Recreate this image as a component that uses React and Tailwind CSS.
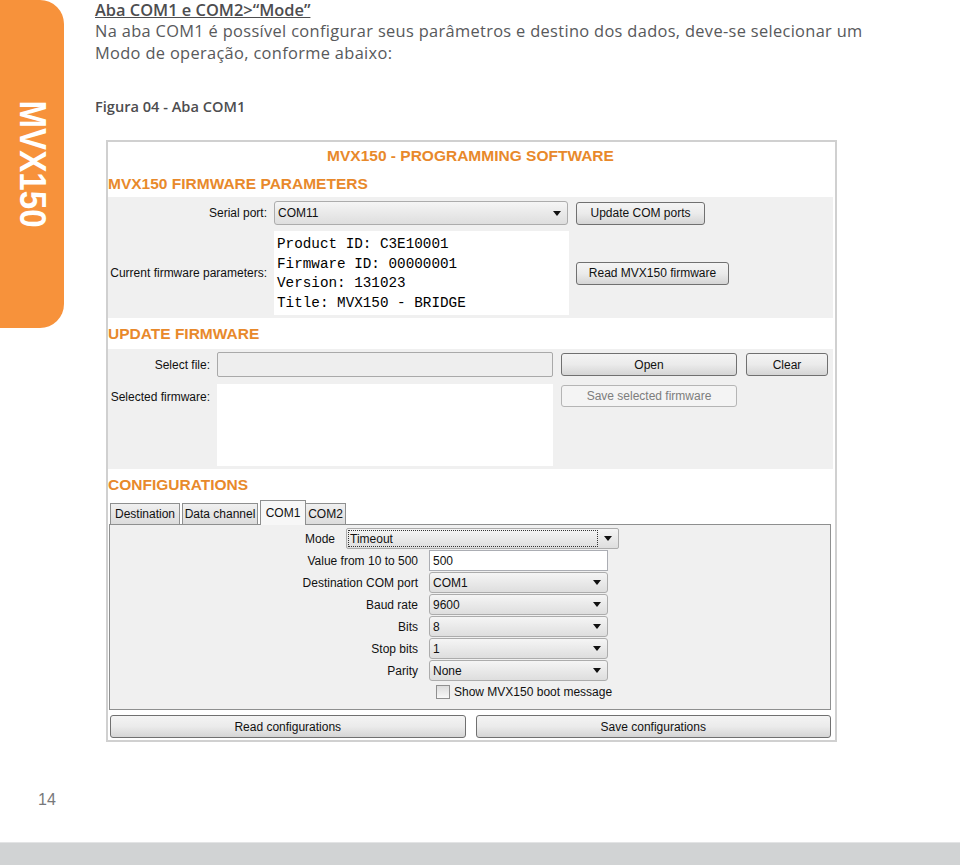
import React from "react";

function Arrow() {
  return (
    <svg width="8" height="5" viewBox="0 0 8 5" className="shrink-0">
      <path d="M0 0h8L4 5z" fill="#111" />
    </svg>
  );
}

function Combo({ value, className }) {
  return (
    <div
      className={
        "flex items-center justify-between rounded-[3px] border border-[#acacac] bg-linear-to-b from-[#f5f5f5] to-[#dedede] pl-[3px] pr-[6px] " +
        className
      }
    >
      <span>{value}</span>
      <Arrow />
    </div>
  );
}

function Btn({ children, className, disabled }) {
  return (
    <div
      className={
        "flex items-center justify-center rounded-[3px] border " +
        (disabled
          ? "border-[#b5b5b5] bg-[#f4f4f4] text-[#7d7d7d] "
          : "border-[#707070] bg-linear-to-b from-[#f4f4f4] via-[#ebebeb] to-[#d5d5d5] text-[#111] ") +
        className
      }
    >
      {children}
    </div>
  );
}

function Heading({ children }) {
  return (
    <div className="flex h-[31px] items-center text-[15.5px] font-bold text-[#e8892b]">
      {children}
    </div>
  );
}

const configRows = [
  ["Destination COM port", "COM1"],
  ["Baud rate", "9600"],
  ["Bits", "8"],
  ["Stop bits", "1"],
  ["Parity", "None"],
];

function Screenshot() {
  return (
    <div className="ml-[11px] mt-[23px] flex h-[602px] w-[731px] flex-col border-2 border-[#d0d0d0] bg-white pr-[2px] font-['Liberation_Sans',Arial,sans-serif] text-[12px] text-[#111]">
      <div className="flex h-[28px] items-center justify-center text-[15.5px] font-bold text-[#e8892b]">
        MVX150 - PROGRAMMING SOFTWARE
      </div>
      <div className="flex h-[27px] items-center text-[15.5px] font-bold text-[#e8892b]">
        MVX150 FIRMWARE PARAMETERS
      </div>

      <div className="flex flex-col gap-[6px] bg-[#f0f0f0] pb-[3px] pt-[4px]">
        <div className="flex h-[24px] items-center">
          <div className="w-[166px] pr-[7px] text-right">Serial port:</div>
          <Combo value="COM11" className="h-[24px] w-[294px]" />
          <Btn className="ml-[8px] h-[23px] w-[129px]">Update COM ports</Btn>
        </div>
        <div className="flex items-center">
          <div className="w-[166px] pr-[7px] text-right">
            Current firmware parameters:
          </div>
          <div className="h-[84px] w-[295px] bg-white pl-[3px] pt-[4px] font-['Liberation_Mono','Courier_New',monospace] text-[14.3px] leading-[19.5px] text-black">
            <div>Product ID: C3E10001</div>
            <div>Firmware ID: 00000001</div>
            <div>Version: 131023</div>
            <div>Title: MVX150 - BRIDGE</div>
          </div>
          <Btn className="ml-[7px] h-[23px] w-[153px]">Read MVX150 firmware</Btn>
        </div>
      </div>

      <Heading>UPDATE FIRMWARE</Heading>

      <div className="flex flex-col gap-[7px] bg-[#f0f0f0] pb-[3px] pt-[3px]">
        <div className="flex h-[25px] items-center">
          <div className="w-[109px] pr-[7px] text-right">Select file:</div>
          <div className="h-[25px] w-[336px] rounded-[2px] border border-[#a9a9a9] bg-[#eeeeee]" />
          <Btn className="ml-[8px] h-[23px] w-[176px]">Open</Btn>
          <Btn className="ml-[9px] h-[23px] w-[82px]">Clear</Btn>
        </div>
        <div className="flex items-start">
          <div className="w-[109px] pr-[7px] pt-[4px] text-right">
            Selected firmware:
          </div>
          <div className="h-[82px] w-[336px] bg-white" />
          <Btn disabled className="ml-[8px] mt-[1px] h-[22px] w-[176px]">
            Save selected firmware
          </Btn>
        </div>
      </div>

      <Heading>CONFIGURATIONS</Heading>

      <div className="ml-[2px] flex h-[24px] items-end">
        <div className="flex h-[21px] w-[70px] items-center justify-center border border-b-0 border-[#8e8f8f] bg-linear-to-b from-[#f0f0f0] to-[#dcdcdc]">
          Destination
        </div>
        <div className="ml-[2px] flex h-[21px] w-[76px] items-center justify-center border border-b-0 border-[#8e8f8f] bg-linear-to-b from-[#f0f0f0] to-[#dcdcdc]">
          Data channel
        </div>
        <div className="relative z-10 -mb-px ml-[2px] flex h-[25px] w-[46px] items-start justify-center border border-b-0 border-[#8e8f8f] bg-[#f7f7f7] pt-[3px]">
          COM1
        </div>
        <div className="flex h-[21px] w-[40px] items-center justify-center border border-b-0 border-l-0 border-[#8e8f8f] bg-linear-to-b from-[#f0f0f0] to-[#dcdcdc]">
          COM2
        </div>
      </div>

      <div className="ml-[1px] mr-[2px] flex h-[186px] flex-col border border-[#8e8f8f] bg-[#f0f0f0] pt-[3px]">
        <div className="flex h-[21px] items-center">
          <div className="w-[236px] pr-[11px] text-right">Mode</div>
          <div className="flex h-[21px] w-[273px] items-center rounded-[2px] border border-[#acacac] bg-linear-to-b from-[#f5f5f5] to-[#dedede] p-[1px]">
            <div className="flex h-full w-[250px] items-center border border-dotted border-[#333] pl-[1px]">
              Timeout
            </div>
            <div className="flex flex-1 items-center justify-center">
              <Arrow />
            </div>
          </div>
        </div>
        <div className="mt-[1px] flex h-[21px] items-center">
          <div className="w-[319px] pr-[11px] text-right">Value from 10 to 500</div>
          <div className="flex h-[21px] w-[179px] items-center border border-[#abadb3] bg-white pl-[3px]">
            500
          </div>
        </div>
        {configRows.map(([label, value]) => (
          <div key={label} className="mt-[1px] flex h-[21px] items-center">
            <div className="w-[319px] pr-[11px] text-right">{label}</div>
            <Combo value={value} className="h-[21px] w-[179px]" />
          </div>
        ))}
        <div className="mt-[3px] flex h-[16px] items-center pl-[326px]">
          <div className="h-[14px] w-[14px] border border-[#8f8f8f] bg-linear-to-b from-[#dcdcdc] to-[#f8f8f8]" />
          <span className="ml-[4px]">Show MVX150 boot message</span>
        </div>
      </div>

      <div className="ml-[2px] mr-[2px] mt-[5px] flex gap-[10px]">
        <Btn className="h-[23px] flex-1">Read configurations</Btn>
        <Btn className="h-[23px] flex-1">Save configurations</Btn>
      </div>
    </div>
  );
}

export default function App() {
  return (
    <div className="flex h-[865px] w-[960px] flex-col overflow-hidden bg-white font-['Liberation_Sans',Arial,sans-serif]">
      <div className="flex flex-1">
        <div className="flex w-[64px] shrink-0 flex-col">
          <div className="flex h-[328px] items-center justify-center rounded-r-[24px] bg-[#f7923b]">
            <span className="scale-y-[0.92] text-[36px] font-bold leading-none text-white [writing-mode:vertical-rl]">
              MVX150
            </span>
          </div>
          <div className="mt-[462px] pl-[38px] text-[16px] leading-[20px] text-[#77787b]">
            14
          </div>
        </div>

        <div className="flex flex-col pl-[31px]">
          <div className="font-['Open_Sans',sans-serif] text-[16.4px] leading-[21.5px] tracking-[0.33px] text-[#58595b]">
            <div className="font-semibold leading-[20px] tracking-normal text-[#4d4d4f] underline">
              Aba COM1 e COM2&gt;“Mode”
            </div>
            <div>
              Na aba COM1 é possível configurar seus parâmetros e destino dos
              dados, deve-se selecionar um
            </div>
            <div>Modo de operação, conforme abaixo:</div>
          </div>
          <div className="mt-[33px] font-['Open_Sans',sans-serif] text-[14.6px] leading-[21px] font-semibold text-[#4d4d4f]">
            Figura 04 - Aba COM1
          </div>
          <Screenshot />
        </div>
      </div>
      <div className="h-[23px] border-t border-[#e3e4e5] bg-[#d1d3d4]" />
    </div>
  );
}
